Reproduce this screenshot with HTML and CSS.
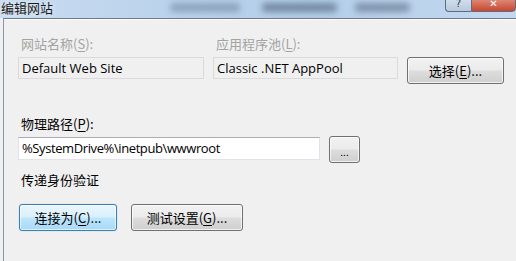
FILE: index.html
```html
<!DOCTYPE html>
<html lang="zh-CN">
<head>
    <meta charset="UTF-8">
    <title>编辑网站</title>
    <link rel="stylesheet" href="styles.css">
</head>
<body>
    <div class="window">
        <div class="titlebar">
            <span class="title">编辑网站</span>
            <div class="glass-blur">
                <span class="blob b1"></span>
                <span class="blob b2"></span>
                <span class="blob b3"></span>
            </div>
            <div class="caption-buttons">
                <span class="cap-btn help">?</span>
                <span class="cap-btn close">✕</span>
            </div>
        </div>

        <div class="frame">
            <div class="content">
                <div class="site-row">
                    <div class="field">
                        <label class="label disabled">网站名称(<u>S</u>):</label>
                        <div class="textbox readonly">Default Web Site</div>
                    </div>
                    <div class="field">
                        <label class="label disabled">应用程序池(<u>L</u>):</label>
                        <div class="textbox readonly">Classic .NET AppPool</div>
                    </div>
                    <button class="btn select-btn">选择(<u>E</u>)...</button>
                </div>

                <div class="path-block">
                    <label class="label">物理路径(<u>P</u>):</label>
                    <div class="path-row">
                        <div class="textbox path">%SystemDrive%\inetpub\wwwroot</div>
                        <button class="btn browse-btn">...</button>
                    </div>
                </div>

                <div class="label auth-label">传递身份验证</div>

                <div class="auth-row">
                    <button class="btn default">连接为(<u>C</u>)...</button>
                    <button class="btn test-btn">测试设置(<u>G</u>)...</button>
                </div>
            </div>
        </div>
    </div>
</body>
</html>
```

FILE: styles.css
```css
html, body {
    margin: 0;
    padding: 0;
    width: 516px;
    height: 261px;
    overflow: hidden;
    background-color: #f0f0f0;
}

body {
    font-family: 'Open Sans', 'Noto Sans CJK SC', sans-serif;
    font-size: 13px;
    color: #000000;
}

.window {
    display: flex;
    flex-direction: column;
    height: 261px;
}

/* Aero glass title bar */
.titlebar {
    position: relative;
    height: 18px;
    background: linear-gradient(to right, #c9dcf0 0%, #bcd3ec 30%, #b3cde9 60%, #c4d9ef 100%);
    overflow: hidden;
}

.title {
    position: absolute;
    left: 1px;
    top: 0;
    font-family: 'Noto Sans CJK SC', sans-serif;
    font-size: 13px;
    line-height: 16px;
    color: #1a1a1a;
    text-shadow: 0 0 6px rgba(255, 255, 255, 0.9);
    z-index: 1;
}

.glass-blur {
    position: absolute;
    inset: 0;
}

.blob {
    position: absolute;
    top: 3px;
    height: 9px;
    border-radius: 4px;
    background-color: rgba(60, 80, 110, 0.35);
    filter: blur(3px);
}

.b1 { left: 170px; width: 70px; }
.b2 { left: 262px; width: 75px; background-color: rgba(40, 55, 80, 0.45); }
.b3 { left: 355px; width: 55px; background-color: rgba(40, 55, 80, 0.4); }

.caption-buttons {
    position: absolute;
    right: 0;
    top: -6px;
    display: flex;
}

.cap-btn {
    height: 16px;
    display: flex;
    align-items: flex-end;
    justify-content: center;
    font-family: 'DejaVu Sans', sans-serif;
    font-size: 10px;
    line-height: 14px;
    border: 1px solid #5c6d82;
}

.cap-btn.help {
    width: 25px;
    background: linear-gradient(#dbe6f3, #b9c9dc);
    color: #2d3b4e;
    border-right: none;
    border-radius: 0 0 0 4px;
}

.cap-btn.close {
    width: 43px;
    background: linear-gradient(#e6a394, #c9472f);
    color: #ffffff;
    font-weight: bold;
    border-radius: 0 0 4px 0;
}

/* Dialog frame */
.frame {
    flex: 1;
    margin-left: 3px;
    border-top: 1px solid #6b7a8c;
    border-left: 1px solid #8a96a4;
    box-shadow: inset 0 1px 0 #ffffff;
    background-color: #f0f0f0;
}

.content {
    padding: 17px 0 0 14px;
    display: flex;
    flex-direction: column;
}

.label {
    display: block;
    font-family: 'Noto Sans CJK SC', sans-serif;
    line-height: 16px;
    padding-left: 3px;
}

.label.disabled {
    color: #a3a3a3;
}

.label u {
    text-decoration-thickness: 1px;
    text-underline-offset: 2px;
}

.site-row {
    display: flex;
    align-items: flex-end;
    gap: 9px;
}

.field {
    display: flex;
    flex-direction: column;
    gap: 5px;
}

.textbox {
    box-sizing: border-box;
    height: 22px;
    line-height: 20px;
    padding-left: 3px;
    border: 1px solid #d9d9d9;
    border-top-color: #c3c3c3;
    background-color: #ffffff;
    white-space: nowrap;
    overflow: hidden;
}

.textbox.readonly {
    width: 186px;
    background-color: #f0f0f0;
    border-color: #dadada;
}

.field:nth-child(2) .textbox.readonly {
    width: 185px;
}

.btn {
    box-sizing: border-box;
    height: 27px;
    padding: 0;
    font-family: 'Noto Sans CJK SC', sans-serif;
    font-size: 13px;
    color: #000000;
    border: 1px solid #707070;
    border-radius: 3px;
    background: linear-gradient(#f2f2f2 0%, #ebebeb 48%, #dddddd 52%, #cfcfcf 100%);
    box-shadow: inset 0 0 0 1px rgba(255, 255, 255, 0.7);
}

.btn u {
    text-underline-offset: 2px;
}

.select-btn {
    width: 97px;
    margin-bottom: -5px;
}

.path-block {
    margin-top: 37px;
    display: flex;
    flex-direction: column;
    gap: 5px;
}

.path-row {
    display: flex;
    align-items: flex-start;
    gap: 9px;
}

.textbox.path {
    width: 302px;
    height: 23px;
    line-height: 21px;
    letter-spacing: -0.4px;
    border-color: #e2e3ea;
    border-top-color: #abadb3;
}

.browse-btn {
    width: 31px;
    font-size: 10px;
    line-height: 10px;
    padding-top: 4px;
    margin-top: -1px;
}

.auth-label {
    margin-top: 9px;
}

.auth-row {
    margin-top: 16px;
    display: flex;
    gap: 14px;
    padding-left: 1px;
}

.btn.default {
    width: 98px;
    border-color: #3c7fb1;
    background: linear-gradient(#eaf6fd 0%, #d9f0fc 48%, #bee6fd 52%, #a7d9f5 100%);
    box-shadow: inset 0 0 0 1px rgba(255, 255, 255, 0.6), 0 0 1px #6fb7e0;
}

.test-btn {
    width: 112px;
}
```
